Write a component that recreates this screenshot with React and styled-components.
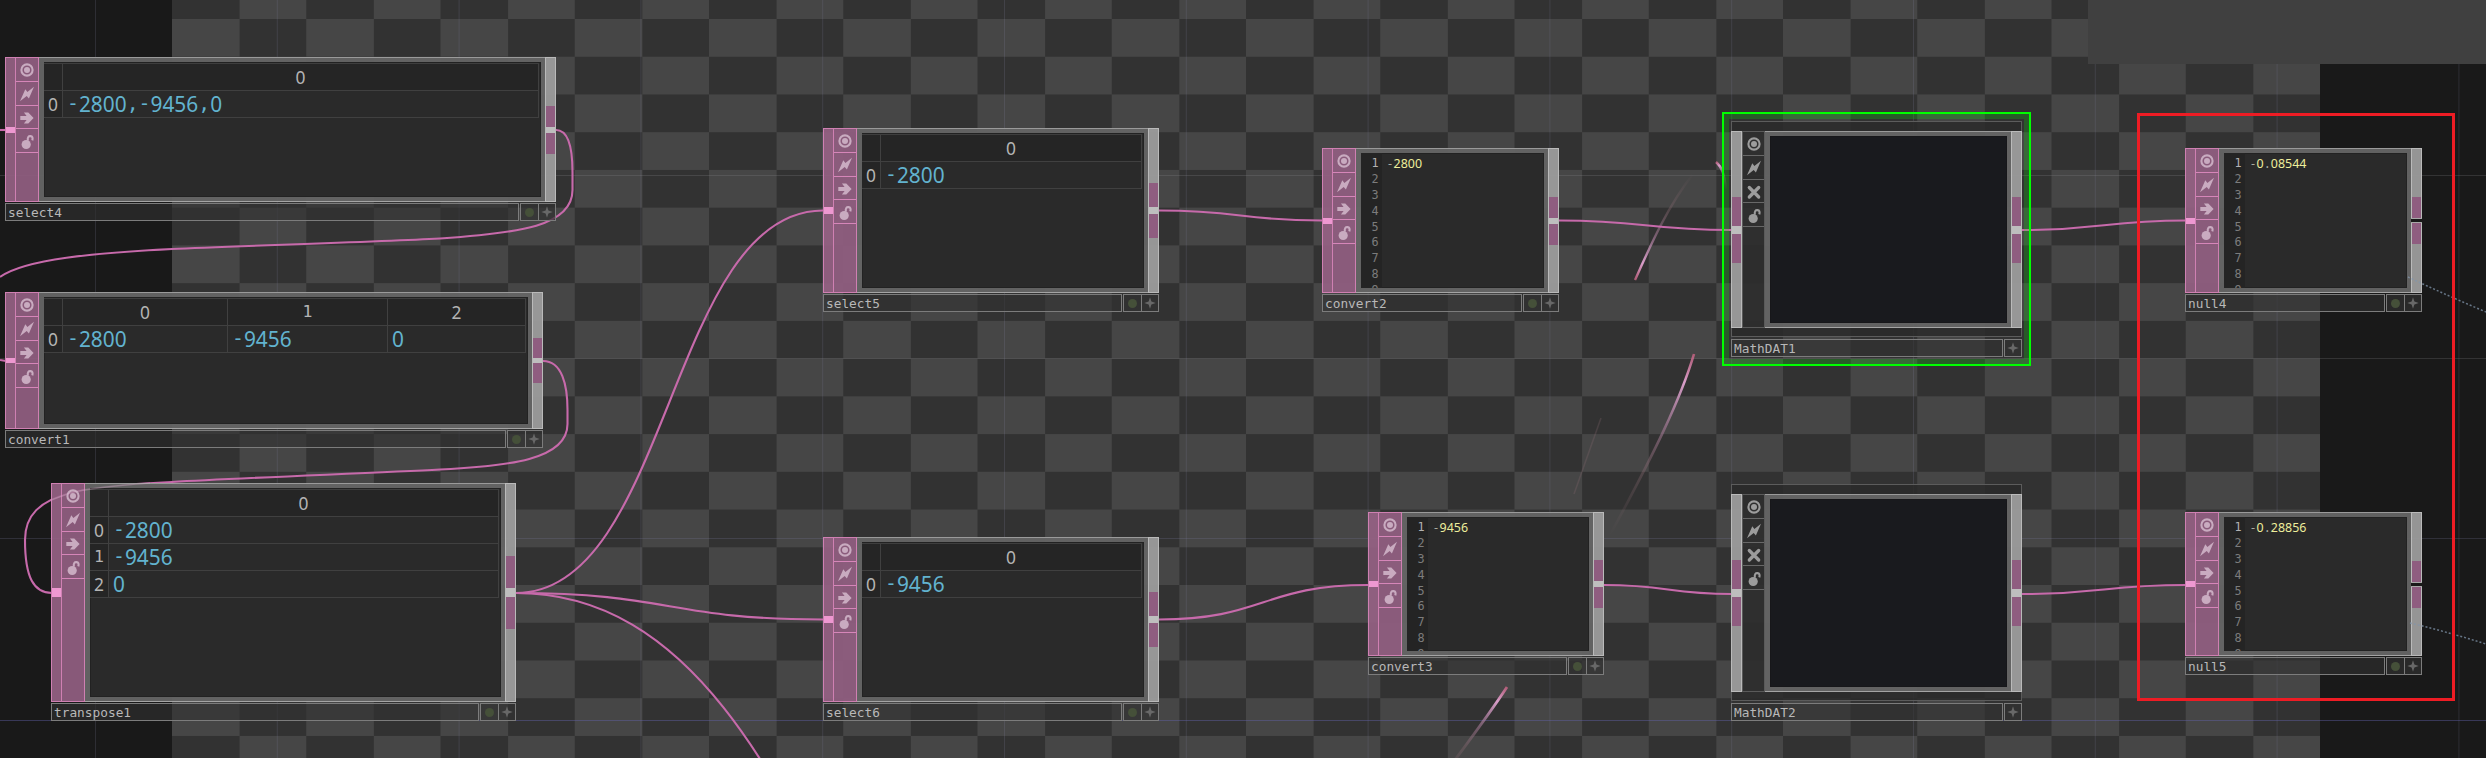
import React from 'react';
import styled, { createGlobalStyle, css } from 'styled-components';

const mono = '"DejaVu Sans Mono", "Liberation Mono", monospace';

const GlobalStyle = createGlobalStyle`
  body { margin: 0; background: #191919; overflow: hidden; }
  *, *::before, *::after { box-sizing: border-box; }
`;

const Network = styled.main`
  position: relative;
  width: 2486px;
  height: 758px;
  overflow: hidden;
  background: #191919;
  font-family: ${mono};
`;

/* Checkered backdrop that fills the middle of the network. */
const Backdrop = styled.div`
  width: 2148px;
  height: 758px;
  margin-left: 172px;
  background-image: conic-gradient(#323232 25%, #464646 0 50%, #323232 0 75%, #464646 0);
  background-size: 134.25px 75.474px;
  background-position: 0 19px;
`;

const Layer = styled.svg`
  position: absolute;
  inset: 0;
  width: 2486px;
  height: 758px;
  pointer-events: none;
`;

const CornerPanel = styled.div`
  position: absolute;
  top: 0;
  right: 0;
  width: 398px;
  height: 64px;
  background: #404040;
`;

const Marker = styled.div`
  position: absolute;
  left: 2137px;
  top: 113px;
  width: 318px;
  height: 588px;
  border: 3px solid #ee1c24;
`;

const Selection = styled.div`
  position: absolute;
  left: 1722px;
  top: 112px;
  width: 309px;
  height: 254px;
  border: 2px solid #00ff00;
  box-shadow: inset 0 0 0 5px rgba(0, 255, 0, 0.2);
`;

const NodeBox = styled.article`
  position: absolute;
  left: ${(p) => p.$x}px;
  top: ${(p) => p.$y}px;
  width: ${(p) => p.$w}px;
  display: flex;
  flex-direction: column;
`;

const Band = styled.div`
  height: ${(p) => p.$h}px;
  background: rgba(42, 42, 42, 0.85);
  border: 1px solid #5c5c5c;
  border-${(p) => p.$open}: none;
`;

const Body = styled.div`
  display: flex;
  height: ${(p) => p.$h}px;
`;

const Strip = styled.div`
  display: flex;
  flex-direction: column;
  justify-content: center;
  width: 11px;
  flex: none;
  background: rgba(154, 154, 154, 0.97);
  border: 1px solid #bababa;
  ${(p) => p.$pink && css`
    width: 10px;
    background: rgba(148, 97, 131, 0.93);
    border-color: #cf80b2;
    border-right: none;
  `}
`;

const Flange = styled.div`
  height: ${(p) => p.$h}px;
  background: #8f5d80;
`;

const Port = styled.div`
  height: ${(p) => p.$h}px;
  background: ${(p) => p.$color};
  ${(p) => p.$open && css`
    height: 5px;
    margin: 0 -1px;
    border: solid #a8a8a8;
    border-width: 1px 0;
  `}
`;

const Flags = styled.div`
  width: ${(p) => (p.$pink ? 24 : 23)}px;
  flex: none;
  background: ${(p) => (p.$pink ? 'rgba(143, 93, 127, 0.94)' : 'rgba(44, 44, 44, 0.9)')};
  border: 1px solid ${(p) => (p.$pink ? '#cf80b2' : '#5a5a5a')};
  color: ${(p) => (p.$pink ? '#c9abc0' : '#9c9c9c')};
`;

const Flag = styled.div`
  display: flex;
  align-items: center;
  justify-content: center;
  height: 23.8px;
  padding-top: 1.6px;
  border-bottom: 1px solid ${(p) => (p.$pink ? '#d686b9' : '#686868')};
`;

const Frame = styled.div`
  flex: 1;
  min-width: 0;
  display: flex;
  padding: 4px 4px 4px 5px;
  background: rgba(100, 100, 100, 0.97);
  border-top: 1px solid #9a9a9a;
  border-bottom: 1px solid #a4a4a4;
`;

const Screen = styled.div`
  flex: 1;
  min-width: 0;
  overflow: hidden;
  background: ${(p) => (p.$blank ? '#191a1e' : '#2a2a2a')};
  box-shadow: inset 0 0 0 1px rgba(20, 20, 20, 0.35);
`;

const Grid = styled.div`
  display: grid;
  grid-template-columns: ${(p) => p.$cols};
  grid-auto-rows: 27px;
  margin: 1px 2px 0 0;
  border-top: 1px solid #3e3e3e;
`;

const Cell = styled.div`
  display: flex;
  align-items: center;
  justify-content: ${(p) => (p.$head ? 'center' : 'flex-start')};
  padding: 0 0 1px ${(p) => (p.$head ? 0 : 4)}px;
  border-right: 1px solid #404040;
  border-bottom: 1px solid #404040;
  background: ${(p) => (p.$head ? '#252525' : 'transparent')};
  color: ${(p) => (p.$head ? '#b4b4b4' : '#62b3cf')};
  font-size: ${(p) => (p.$head ? 16.5 : 19.8)}px;
  line-height: 24px;
`;

const Digits = styled.span`
  font-family: "Noto Sans", sans-serif;
  font-size: 1.054em;
  color: ${(p) => p.$color || 'inherit'};
`;

const Editor = styled.div`
  display: grid;
  grid-template-columns: 21px 1fr;
  height: 100%;
  font-size: 11.8px;
  line-height: 15.9px;
`;

const Gutter = styled.div`
  padding: 3px 3.5px 0 0;
  background: #242424;
  color: #7c7c7c;
  text-align: right;
`;

const LineNo = styled.div`
  height: 15.9px;
  color: ${(p) => (p.$active ? '#b2b2b2' : 'inherit')};
`;

const Code = styled.div`
  padding: 3px 0 0 4.5px;
  color: #a9aaa0;
`;

const Footer = styled.footer`
  display: flex;
  gap: 1px;
  height: 18px;
  margin-top: ${(p) => p.$gap}px;
`;

const Name = styled.div`
  flex: 1;
  padding: 1px 0 0 2px;
  border: 1px solid #7c7c7c;
  background: rgba(48, 48, 48, 0.6);
  color: #b8b8b8;
  font-size: 12.8px;
  line-height: 15px;
`;

const Buttons = styled.div`
  display: flex;
  border: 1px solid #7c7c7c;
  background: rgba(48, 48, 48, 0.7);
`;

const Button = styled.div`
  display: flex;
  align-items: center;
  justify-content: center;
  width: ${(p) => (p.$divided ? 18 : 16)}px;
  border-right: ${(p) => (p.$divided ? '1px solid #7c7c7c' : 'none')};
`;

const Dot = styled.span`
  width: 9px;
  height: 9px;
  border-radius: 50%;
  background: #455039;
`;

const glyphs = {
  viewer: (
    <>
      <circle cx="8" cy="8" r="5.6" fill="none" stroke="currentColor" strokeWidth="2.1" />
      <circle cx="8" cy="8" r="3" fill="currentColor" />
    </>
  ),
  bolt: <path d="M1 15.3 6.3 3.3 8.4 5.9 15 .7 9.9 12.4 7.7 9.9Z" fill="currentColor" />,
  arrow: <path d="M1.3 6.1H7.6L4.9 2.6H9.3L14.6 8 9.3 13.4H4.9L7.6 9.9H1.3Z" fill="currentColor" />,
  cross: <path d="M3.3 3.5 12.7 13M12.7 3.5 3.3 13" stroke="currentColor" strokeWidth="3.3" strokeLinecap="round" />,
  lock: (
    <>
      <circle cx="7.2" cy="10.5" r="4.6" fill="currentColor" />
      <path d="M8.9 6.8C8.2 3.2 9.7 1.9 11.5 2.1 13.5 2.3 14 4 13.3 6.4" fill="none" stroke="currentColor" strokeWidth="2.1" />
    </>
  ),
};

const Glyph = ({ kind }) => (
  <svg width="16" height="16" viewBox="0 0 16 16">{glyphs[kind]}</svg>
);

const Star = () => (
  <svg width="12" height="12" viewBox="0 0 12 12">
    <path d="M6 .3 7.4 4.6 11.7 6 7.4 7.4 6 11.7 4.6 7.4 .3 6 4.6 4.6Z" fill="#686868" />
  </svg>
);

/* Digits are set in their own face; a lone 1 keeps its foot from the mono face. */
const Value = ({ text, color }) =>
  text.split(/([02-9]+)/).filter(Boolean).map((part, i) =>
    /\d/.test(part) && part !== '1' ? <Digits key={i} $color={color}>{part}</Digits> : part
  );

function Table({ widths, rows }) {
  return (
    <Grid $cols={`19px ${widths}`}>
      <Cell $head />
      {rows[0].map((_, i) => <Cell key={i} $head><Value text={String(i)} /></Cell>)}
      {rows.map((row, r) => (
        <React.Fragment key={r}>
          <Cell $head><Value text={String(r)} /></Cell>
          {row.map((v, c) => <Cell key={c}><Value text={v} /></Cell>)}
        </React.Fragment>
      ))}
    </Grid>
  );
}

function Lines({ text }) {
  return (
    <Editor>
      <Gutter>
        {[1, 2, 3, 4, 5, 6, 7, 8, 9].map((n) => <LineNo key={n} $active={n === 1}>{n}</LineNo>)}
      </Gutter>
      <Code><Value text={text} color="#eeee9c" /></Code>
    </Editor>
  );
}

function Connector({ h, open }) {
  const port = Math.round(h / 25);
  const flange = Math.round((h / 3 - port) / 2);
  return (
    <Strip>
      <Flange $h={flange} />
      <Port $h={port} $open={open} $color={open ? '#191919' : '#bebebe'} />
      <Flange $h={flange} />
    </Strip>
  );
}

function Node({ x, y, w, h, name, custom, open, children }) {
  const pink = !custom;
  return (
    <NodeBox $x={x} $y={y} $w={w}>
      {custom && <Band $h={10} $open="bottom" />}
      <Body $h={h}>
        {custom ? <Connector h={h} /> : (
          <Strip $pink><Port $h={Math.round(h / 25)} $color="#ee98d1" /></Strip>
        )}
        <Flags $pink={pink}>
          {['viewer', 'bolt', custom ? 'cross' : 'arrow', 'lock'].map((k) => (
            <Flag key={k} $pink={pink}><Glyph kind={k} /></Flag>
          ))}
        </Flags>
        <Frame><Screen $blank={custom}>{children}</Screen></Frame>
        <Connector h={h} open={open} />
      </Body>
      {custom && <Band $h={9} $open="top" />}
      <Footer $gap={custom ? 2 : 1}>
        <Name>{name}</Name>
        <Buttons>
          {!custom && <Button $divided><Dot /></Button>}
          <Button><Star /></Button>
        </Buttons>
      </Footer>
    </NodeBox>
  );
}

const verticals = Array.from({ length: 14 }, (_, i) => 95.5 + i * 181.8);

const link = (x1, y1, x2, y2) => {
  const mid = (x1 + x2) / 2;
  return `M${x1} ${y1}C${mid} ${y1} ${mid} ${y2} ${x2} ${y2}`;
};

const wires = [
  'M0 130H6',
  'M556 130C569 130 572.5 150 572.5 172V190C572.5 226 520 233 440 238.5C374 242 239 246 172 249C95 253 25 259 0 277',
  'M0 360L6 361',
  'M543 361C562 361 567.5 385 567.5 410V424C567.5 460 508 466 440 469.5C374 473 239 478 172 482C130 484 90 487 70 493C40 501 25 515 25 540C25 578 34 593 52 593',
  link(516, 593, 823, 210.5),
  link(516, 593, 823, 619.5),
  link(516, 593, 1216, 1328),
  link(1159, 210.5, 1322, 220.5),
  link(1559, 220.5, 1732, 230),
  link(2022, 230, 2186, 220.5),
  link(1159, 619.5, 1368, 585),
  link(1604, 585, 1732, 594),
  link(2022, 594, 2186, 585),
];

const streaks = [
  ['s1', 1635, 280, 1693, 174, 'M1635 280C1652 242 1668 206 1693 174', 2.4],
  ['s2', 1694, 354, 1610, 535, 'M1694 354C1681 398 1655 452 1610 535', 2.6],
  ['s3', 1507, 687, 1440, 780, 'M1507 687C1490 713 1470 740 1440 780', 2.8],
  ['s4', 1716, 162, 1726, 190, 'M1716 162C1722 167 1725 175 1726 190', 2.4],
];

export default function App() {
  return (
    <Network>
      <GlobalStyle />
      <Backdrop />
      <Layer viewBox="0 0 2486 758">
        <defs>
          {streaks.map(([id, x1, y1, x2, y2]) => (
            <linearGradient key={id} id={id} gradientUnits="userSpaceOnUse" x1={x1} y1={y1} x2={x2} y2={y2}>
              <stop offset="0" stopColor="#c2607f" stopOpacity="0.85" />
              <stop offset="0.15" stopColor="#e2a4d2" stopOpacity="0.95" />
              <stop offset="0.4" stopColor="#a97c9a" stopOpacity="0.6" />
              <stop offset="0.65" stopColor="#8a6a72" stopOpacity="0.35" />
              <stop offset="1" stopColor="#8a6a72" stopOpacity="0" />
            </linearGradient>
          ))}
        </defs>
        {verticals.map((x) => (
          <path key={x} d={`M${x} 0V758`} stroke="#8080a0" strokeOpacity="0.2" />
        ))}
        <path d="M0 175.5H2486M0 358.5H2486" stroke="#909098" strokeOpacity="0.22" />
        <path d="M0 538.5H2486" stroke="#7878a0" strokeOpacity="0.24" />
        <path d="M0 720.5H2486" stroke="#6464b0" strokeOpacity="0.42" />
        {streaks.map(([id, , , , , d, width]) => (
          <path key={id} d={d} fill="none" stroke={`url(#${id})`} strokeWidth={width} />
        ))}
        <path d="M1574 494 1601 418" stroke="#8a6a72" strokeOpacity="0.25" strokeWidth="1.6" />
        {wires.map((d) => (
          <path key={d} d={d} fill="none" stroke="#c76aab" strokeWidth="2.1" />
        ))}
      </Layer>
      <CornerPanel />
      <Selection />

      <Node x={5} y={57} w={551} h={145} name="select4">
        <Table widths="1fr" rows={[['-2800,-9456,0']]} />
      </Node>
      <Node x={5} y={292} w={538} h={137} name="convert1">
        <Table widths="165px 160px 1fr" rows={[['-2800', '-9456', '0']]} />
      </Node>
      <Node x={51} y={483} w={465} h={219} name="transpose1">
        <Table widths="1fr" rows={[['-2800'], ['-9456'], ['0']]} />
      </Node>
      <Node x={823} y={128} w={336} h={165} name="select5">
        <Table widths="1fr" rows={[['-2800']]} />
      </Node>
      <Node x={823} y={537} w={336} h={165} name="select6">
        <Table widths="1fr" rows={[['-9456']]} />
      </Node>
      <Node x={1322} y={148} w={237} h={145} name="convert2"><Lines text="-2800" /></Node>
      <Node x={1368} y={512} w={236} h={144} name="convert3"><Lines text="-9456" /></Node>
      <Node x={1731} y={121} w={291} h={197} name="MathDAT1" custom />
      <Node x={1731} y={484} w={291} h={198} name="MathDAT2" custom />
      <Node x={2185} y={148} w={237} h={145} name="null4" open><Lines text="-0.08544" /></Node>
      <Node x={2185} y={512} w={237} h={144} name="null5" open><Lines text="-0.28856" /></Node>

      <Layer viewBox="0 0 2486 758">
        <path d="M150 483C110 486 85 489 70 493L51 500" fill="none" stroke="#e0b4d0" strokeOpacity="0.35" strokeWidth="1.6" />
        <path d="M2408 277Q2446 295 2486 312M2410 623Q2448 632 2486 644" fill="none" stroke="#8296ac" strokeOpacity="0.75" strokeWidth="1.5" strokeDasharray="2 2" />
      </Layer>
      <Marker />
    </Network>
  );
}
